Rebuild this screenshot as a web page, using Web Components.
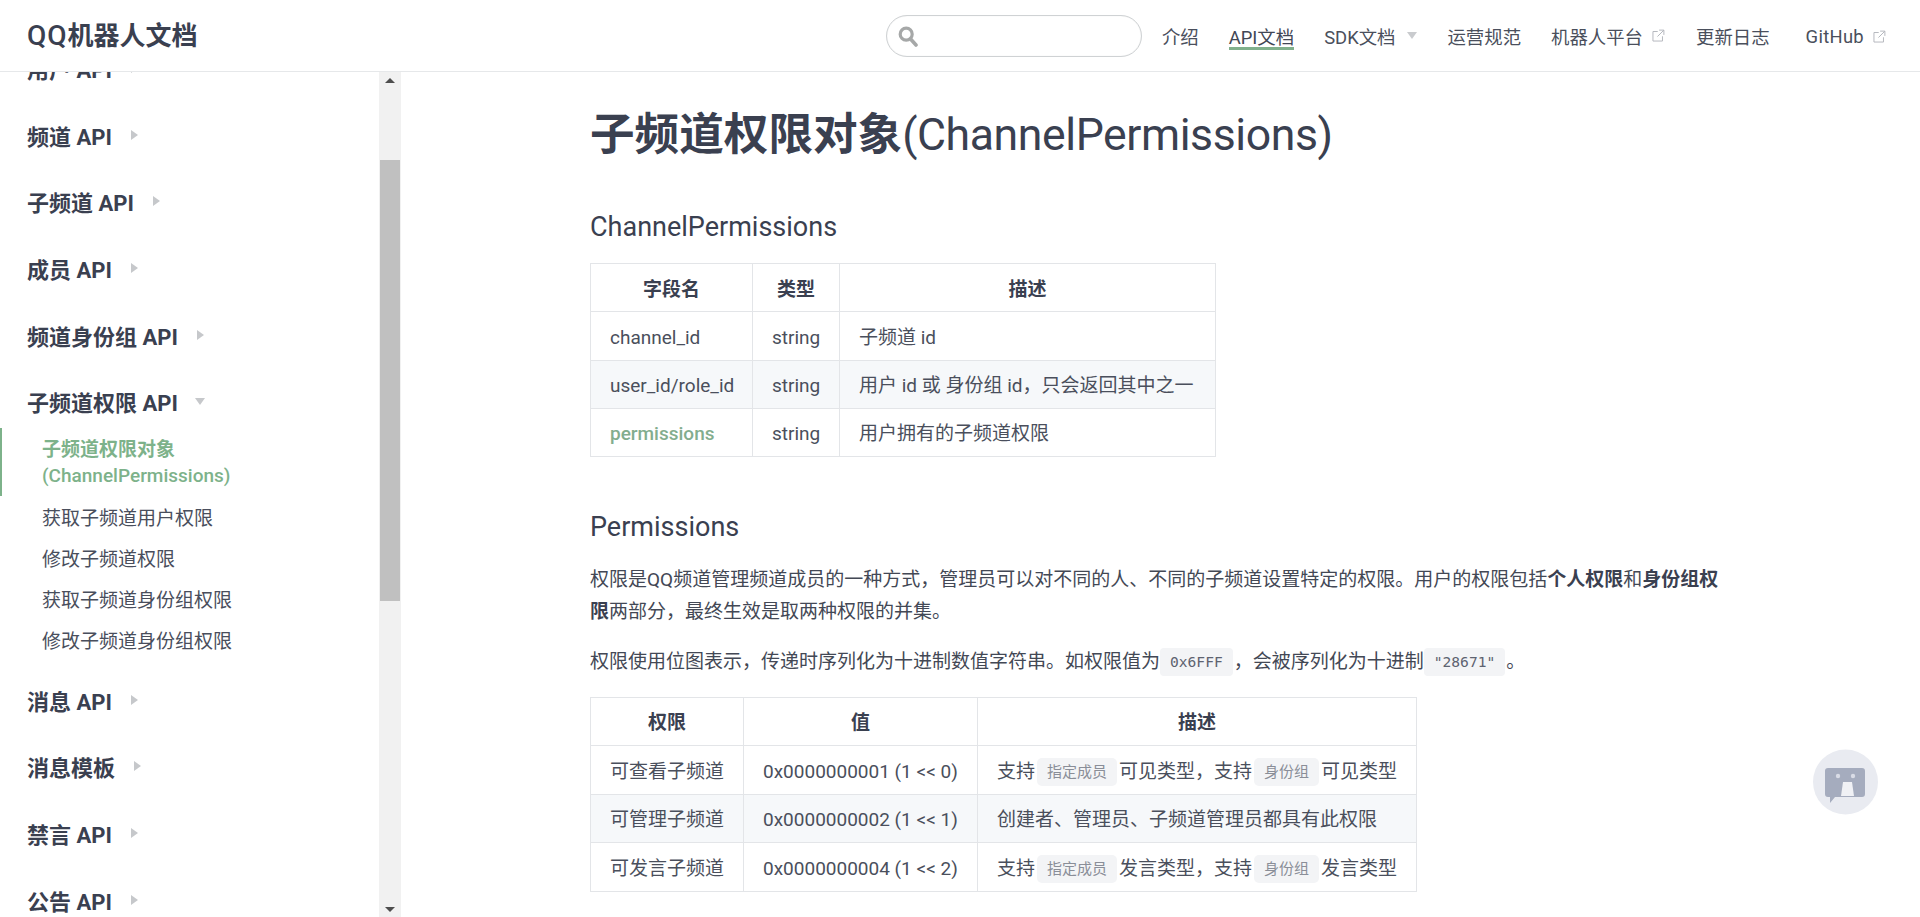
<!DOCTYPE html>
<html lang="zh-CN"><head><meta charset="utf-8"><title>QQ机器人文档</title>
<style>
html,body{margin:0;height:100%;overflow:hidden;background:#fff}
body{font-family:Roboto,"Noto Sans CJK SC",sans-serif;color:#3a4050}
</style></head><body>
<qq-app>
  <qq-navbar slot="top"></qq-navbar>
  <qq-sidebar slot="side">
    <qq-group>用户 API</qq-group>
    <qq-group>频道 API</qq-group>
    <qq-group>子频道 API</qq-group>
    <qq-group>成员 API</qq-group>
    <qq-group>频道身份组 API</qq-group>
    <qq-group open>子频道权限 API
      <qq-link slot="links" active><b>子频道权限对象</b><br>(ChannelPermissions)</qq-link>
      <qq-link slot="links">获取子频道用户权限</qq-link>
      <qq-link slot="links">修改子频道权限</qq-link>
      <qq-link slot="links">获取子频道身份组权限</qq-link>
      <qq-link slot="links">修改子频道身份组权限</qq-link>
    </qq-group>
    <qq-group>消息 API</qq-group>
    <qq-group>消息模板</qq-group>
    <qq-group>禁言 API</qq-group>
    <qq-group>公告 API</qq-group>
  </qq-sidebar>
  <qq-doc slot="main"></qq-doc>
  <qq-bot slot="float"></qq-bot>
</qq-app>
<script>
function def(name, html, extra){
  const t=document.createElement('template');t.innerHTML=html;
  customElements.define(name,class extends HTMLElement{
    constructor(){super();this.attachShadow({mode:'open'}).appendChild(t.content.cloneNode(true));}
    connectedCallback(){extra&&extra(this)}
  });
}
const ext='<svg width="14" height="14" viewBox="0 0 100 100" fill="none" stroke="#b4b7bd" stroke-width="7"><path d="M48 18H14v68h68V52"/><path d="M58 8h34v34M92 8 46 54"/></svg>';
def('qq-app',`<style>
:host{display:flex;flex-direction:column;height:917px;position:relative;overflow:hidden}
.body{flex:1;display:flex;min-height:0}
::slotted([slot=float]){position:absolute;right:42px;top:749px}
</style><slot name="top"></slot><div class="body"><slot name="side"></slot><slot name="main"></slot></div><slot name="float"></slot>`);
def('qq-navbar',`<style>
:host{display:flex;align-items:center;height:71px;border-bottom:1px solid #e6e8ea;box-sizing:content-box;padding:0 34px 0 27px;font-size:18.4px;color:#4a4f5c;flex:none}
.logo{font-size:28px;color:#3a4050;line-height:1;flex:1;font-weight:500;padding-top:1px;letter-spacing:1px}
.logo b{font-weight:700;font-size:26px;letter-spacing:0}
.search{width:241px;height:40px;border:1px solid #cfd2d4;border-radius:21px;display:flex;align-items:center;padding-left:11px;padding-right:2px;box-sizing:content-box;margin-right:20px;margin-top:1px;box-shadow:inset 0 0 1px #ddd}
nav{display:flex;align-items:center;height:41px}
a{display:flex;align-items:center;gap:8px;height:29px;box-sizing:border-box;white-space:nowrap;margin-right:30px;padding-top:0}
a.on{border-bottom:3px solid #80b08c;color:#414655;padding-top:3px}
.caret{width:0;height:0;border:5px solid transparent;border-top:7px solid #c9cbce;border-bottom:0;margin-left:4px}
a:last-child{margin-right:0}
a.pf{margin-right:31px}
a.gh{margin-left:6px;letter-spacing:.3px;padding-top:2px}
</style>
<div class="logo">QQ<b>机器人文档</b></div>
<div class="search"><svg width="20" height="21" viewBox="0 0 20 21"><circle cx="8.2" cy="8.2" r="6" fill="none" stroke="#a6a8a8" stroke-width="3.2"/><path d="M12.6 13 18 19" stroke="#a6a8a8" stroke-width="3.6" stroke-linecap="round"/></svg></div>
<nav><a>介绍</a><a class="on">API文档</a><a>SDK文档<span class="caret"></span></a><a>运营规范</a><a class="pf">机器人平台${ext}</a><a>更新日志</a><a class="gh">GitHub${ext}</a></nav>`);
def('qq-sidebar',`<style>
:host{display:flex;width:401px;flex:none;height:846px;overflow:hidden}
.list{flex:1;min-width:0;margin-top:-26px}
.bar{width:22px;flex:none;background:#f1f1f1;display:flex;flex-direction:column;align-items:center;padding-right:0;box-sizing:border-box}
.arrow{height:17px;flex:none;display:flex;align-items:center;justify-content:center}
.up{border:5px solid transparent;border-top:0;border-bottom:5px solid #4d4d4d;width:0;height:0}
.dn{border:5px solid transparent;border-bottom:0;border-top:5px solid #4d4d4d;width:0;height:0}
.gap1{height:71px;flex:none}
.thumb{height:441px;width:20px;background:#c0c0c0;flex:none;margin-right:1px}
.gap2{flex:1}
</style><div class="list"><slot></slot></div>
<div class="bar"><div class="arrow"><div class="up"></div></div><div class="gap1"></div><div class="thumb"></div><div class="gap2"></div><div class="arrow"><div class="dn"></div></div></div>`);
def('qq-group',`<style>
:host{display:block;margin-bottom:22.7px;font-size:22px;color:#3a4050}
.h{display:flex;align-items:center;height:44px;padding-left:27px;font-weight:700;white-space:nowrap}
.tri{width:0;height:0;border:5px solid transparent;border-left:7px solid #c6c8cb;border-right:0;margin-left:19px}
:host([open]) .tri{border:5px solid transparent;border-top:7px solid #c6c8cb;border-bottom:0;margin-left:17px;margin-top:1px}
.links{display:none;margin-top:4.8px;margin-bottom:-5.2px}
:host([open]) .links{display:block}
</style><div class="h"><slot></slot><span class="tri"></span></div><div class="links"><slot name="links"></slot></div>`);
def('qq-link',`<style>
:host{display:block;font-size:19px;line-height:27px;padding:8.4px 0 5.6px 42px;color:#494e5c;white-space:nowrap}
:host([active]){color:#7db28a;border-left:2px solid #7db28a;padding:8.4px 0 7.6px 40px;line-height:26px;font-weight:500}
</style><slot></slot>`);
def('qq-table',`<style>:host{display:block;border:1px solid #e3e5e8;border-bottom:0;box-sizing:border-box;font-size:19px;color:#4a4f5c}</style><slot></slot>`);
def('qq-row',`<style>
:host{display:grid;grid-template-columns:var(--cols);height:var(--row);border-bottom:1px solid #e3e5e8;box-sizing:border-box}
:host(:nth-child(odd)){background:#f6f8fa}
:host(:first-child){background:#fff}
</style><slot></slot>`);
def('qq-cell',`<style>
:host{display:flex;align-items:center;padding-left:19px;padding-top:3.5px;white-space:nowrap;border-left:1px solid #e3e5e8;box-sizing:border-box}
:host(:first-child){border-left:0}
:host([head]){justify-content:center;padding-left:0;padding-top:4px;font-weight:700;color:#3a4050}
:host([link]){color:#83ad8e;font-weight:500}
</style><slot></slot>`);
def('qq-tag',`<style>:host{display:inline-flex;align-items:center;height:28px;padding:0 10px;margin:0 2px;background:#f3f4f6;border-radius:5px;font-size:15px;color:#8a8e98}</style><slot></slot>`);
def('qq-code',`<style>:host{display:inline-flex;align-items:center;height:28px;padding:0 10px;margin:0 1px 0 0;background:#f3f4f6;border-radius:4px;font:14.6px "DejaVu Sans Mono",monospace;color:#5e6370;vertical-align:1px}</style><slot></slot>`);
def('qq-doc',`<style>
:host{flex:1;min-width:0;display:block;padding:0 190px 0 189px;color:#434855;font-size:19px;line-height:32px}
h1{margin:0;padding-top:31.5px;font-size:44.6px;line-height:62px;font-weight:400;color:#3a4050;white-space:nowrap;letter-spacing:-.42px}
h1 b{font-weight:700;letter-spacing:0}
h2{margin:0;font-size:27px;font-weight:400;line-height:38px;color:#3a4050}
h2.a{margin-top:42.7px;margin-bottom:17px}
h2.b{margin-top:51.2px;margin-bottom:18px}
p{margin:0 0 18.2px;white-space:nowrap}
p b{color:#3a4050;font-weight:700}
.t1{width:626px;--cols:161px 87px 1fr;--row:48.2px}
.t2{width:827px;--cols:152px 234px 1fr;--row:48.5px}
</style>
<h1><b>子频道权限对象</b>(ChannelPermissions)</h1>
<h2 class="a">ChannelPermissions</h2>
<qq-table class="t1">
<qq-row><qq-cell head>字段名</qq-cell><qq-cell head>类型</qq-cell><qq-cell head>描述</qq-cell></qq-row>
<qq-row><qq-cell>channel_id</qq-cell><qq-cell>string</qq-cell><qq-cell>子频道 id</qq-cell></qq-row>
<qq-row><qq-cell>user_id/role_id</qq-cell><qq-cell>string</qq-cell><qq-cell>用户 id 或 身份组 id，只会返回其中之一</qq-cell></qq-row>
<qq-row><qq-cell link>permissions</qq-cell><qq-cell>string</qq-cell><qq-cell>用户拥有的子频道权限</qq-cell></qq-row>
</qq-table>
<h2 class="b">Permissions</h2>
<p>权限是QQ频道管理频道成员的一种方式，管理员可以对不同的人、不同的子频道设置特定的权限。用户的权限包括<b>个人权限</b>和<b>身份组权</b><br><b>限</b>两部分，最终生效是取两种权限的并集。</p>
<p>权限使用位图表示，传递时序列化为十进制数值字符串。如权限值为<qq-code>0x6FFF</qq-code>，会被序列化为十进制<qq-code>"28671"</qq-code>。</p>
<qq-table class="t2">
<qq-row><qq-cell head>权限</qq-cell><qq-cell head>值</qq-cell><qq-cell head>描述</qq-cell></qq-row>
<qq-row><qq-cell>可查看子频道</qq-cell><qq-cell>0x0000000001 (1 &lt;&lt; 0)</qq-cell><qq-cell>支持<qq-tag>指定成员</qq-tag>可见类型，支持<qq-tag>身份组</qq-tag>可见类型</qq-cell></qq-row>
<qq-row><qq-cell>可管理子频道</qq-cell><qq-cell>0x0000000002 (1 &lt;&lt; 1)</qq-cell><qq-cell>创建者、管理员、子频道管理员都具有此权限</qq-cell></qq-row>
<qq-row><qq-cell>可发言子频道</qq-cell><qq-cell>0x0000000004 (1 &lt;&lt; 2)</qq-cell><qq-cell>支持<qq-tag>指定成员</qq-tag>发言类型，支持<qq-tag>身份组</qq-tag>发言类型</qq-cell></qq-row>
</qq-table>`);
def('qq-bot',`<style>:host{display:block;width:65px;height:66px}svg{display:block}</style>
<svg width="65" height="66" viewBox="0 0 65 66"><circle cx="32.5" cy="33" r="32.5" fill="#e9ebf1"/>
<path d="M15 19H49a3 3 0 0 1 3 3V45a3 3 0 0 1-3 3H22L17 54V48H15a3 3 0 0 1-3-3V22a3 3 0 0 1 3-3Z" fill="#a5acbe"/>
<circle cx="25" cy="27" r="2.2" fill="#d9dce6"/><circle cx="40" cy="27" r="2.2" fill="#d9dce6"/>
<path d="M30 33h9l2 14H28Z" fill="#f0f1f5"/></svg>`);
</script></body></html>
